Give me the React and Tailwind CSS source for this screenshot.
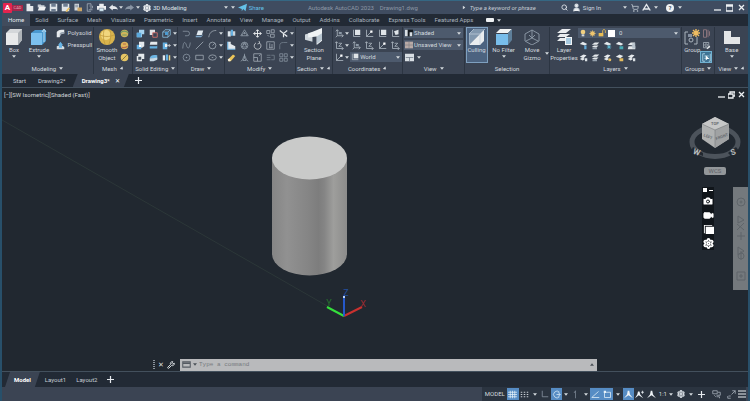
import clsx from 'clsx';
import { Camera, Search, Settings, ShoppingCart, User, Video, Wrench } from 'lucide-react';

const ICONS = {
  // title bar
  file: <path d="M2 1h5v3h4v7H2z" fill="#e4e8ec" />,
  open: <><path d="M1 2h4l1 1h4v3H1z" fill="#c9cfd6" /><path d="M1 10l2-5h9l-2 5z" fill="#eef0f2" /></>,
  save: <><path d="M1 1h10v10H1z" fill="#dfe4e8" /><path d="M3 1h6v4H3zM3 8h6v3H3z" fill="#6d7c90" /></>,
  saveAs: <><path d="M1 1h10v10H1z" fill="#dfe4e8" /><path d="M3 1h6v4H3z" fill="#6d7c90" /><path d="M6 11l4-5 2 1-4 5z" fill="#e9c063" /></>,
  openWeb: <><path d="M2 1h6v9H2z" fill="#d5dade" /><path d="M3 3h4M3 5h4" stroke="#69788b" /><path d="M6 6h6v5H6z" fill="#caa465" /></>,
  mobile: <path d="M3 1h5v2M3 1v10h5M5 9h5M8 5v3M6 4h4v3" fill="none" stroke="#aab3bd" />,
  print: <><path d="M3 1h6v3H3zM0 4h12v5H0z" fill="#eceff1" /><path d="M3 7h6v4H3z" fill="#d8edf6" stroke="#4b5a6c" strokeWidth=".6" /></>,
  undo: <path d="M0 6l5-4v2c4 0 6 2 7 5-2-1-3-1-7-1v2z" fill="#e4e8ec" />,
  redo: <path d="M12 6L7 2v2C3 4 1 6 0 9c2-1 3-1 7-1v2z" fill="#8995a4" />,
  plane: <path d="M0 6l12-5-2 10-3-3-2 3V8z" fill="#64c1e8" />,
  autodesk: <path d="M1 10L6 2l5 8M3 8h6" fill="none" stroke="#e4e8ec" strokeWidth="1.8" />,
  // small tools
  polysolid: <><path d="M1 4c2-3 5-3 10-3v5c-4 0-5 1-6 5H1z" fill="#e6eaed" /><path d="M5 6c1-2 3-2 6-2v2c-4 0-5 1-6 5z" fill="#9aa5b1" /></>,
  presspull: <><path d="M1 7l3-1h4l3 2v3H1z" fill="#d5dbe0" /><path d="M3 5l3-4 3 4-1 1v3H4V6z" fill="#68b4e5" /></>,
  union: <><path d="M4 1h7v6H8v4H1V5h3z" fill="#a7d4f0" /><path d="M1 5h6v6H1z" fill="#5ba9dd" /></>,
  subtract: <><path d="M1 1h7v7H1z" fill="#e0e3e6" /><path d="M5 5h6v6H5z" fill="#3b4453" stroke="#d1716b" strokeWidth="1.2" /></>,
  intersect: <><path d="M1 4l3-3h7v7l-3 3H1zM1 4h7v7M8 4l3-3" fill="none" stroke="#8ec4e6" /><path d="M4 4h4v4H4z" fill="#4b9ad0" /></>,
  slice: <><path d="M4 1h7v6L8 9H4z" fill="#e5e9ec" /><path d="M1 5h6v6H1z" fill="#64afe0" /><path d="M4 5h3v3H4z" fill="#fff" /></>,
  thicken: <><path d="M2 1h9v4H1z" fill="#e5e9ec" /><path d="M1 7h9l1-1v4H1z" fill="#64afe0" /></>,
  extrudeFace: <><path d="M1 2h6v9H1z" fill="#64afe0" /><path d="M4 4h3v4H4z" fill="#eff2f4" /><path d="M7 6h4M9 4l2 2-2 2" fill="none" stroke="#d9dee2" /></>,
  shell: <><path d="M3 1h8v7H8v3H1V4h2z" fill="#e5e9ec" /><path d="M3 5h4v4H3z" fill="#45515f" /></>,
  fillet: <><path d="M1 7c1-4 4-5 10-4v5H6z" fill="#6db5e3" /><path d="M1 7h5l5-1v3l-5 2H1z" fill="#c8d9e5" /></>,
  separate: <><path d="M1 3h3v7H1z" fill="#e5e9ec" /><path d="M5 2h3v8H5z" fill="#64afe0" /><path d="M9 3h2v7H9z" fill="#e9d28a" /></>,
  ballGreen: <><circle cx="6" cy="6" r="5" fill="#cfb45b" /><path d="M1 5c3-3 6-3 10 0M3 8h6" stroke="#6f9a66" strokeWidth="1.6" fill="none" /></>,
  ballRed: <><circle cx="6" cy="6" r="5" fill="#e0b65c" /><path d="M2 8c3 2 5 1 8-1M4 4h4" stroke="#b56b4c" strokeWidth="1.5" fill="none" /></>,
  ballGold: <><circle cx="6" cy="6" r="5" fill="#e6c564" /><path d="M3 9l6-6" stroke="#7f763f" strokeWidth="1.3" /></>,
  polyline: <path d="M1 3h6a3 3 0 010 6H4" fill="none" stroke="#8c98a6" />,
  spline: <path d="M1 10c1-12 4-8 5-4s4 6 5-4" fill="none" stroke="#8c98a6" />,
  polygon: <><circle cx="6" cy="6" r="4.5" fill="none" stroke="#8c98a6" /><circle cx="6" cy="6" r="1" fill="#8c98a6" /></>,
  planar: <><path d="M4 2h7L9 8H2z" fill="#dfe7ee" /><path d="M1 9h8l1-3v3l-2 2H1z" fill="#7fa8ca" /></>,
  line: <path d="M1 11L11 1" stroke="#a5afba" />,
  rect: <path d="M1 3h10v6H1z" fill="none" stroke="#a5afba" />,
  arc: <path d="M1 11C2 5 5 2 11 2" fill="none" stroke="#a5afba" />,
  circle: <><circle cx="6" cy="6" r="4.5" fill="none" stroke="#a5afba" /><path d="M6 6l3-3" stroke="#a5afba" /></>,
  ellipse: <><ellipse cx="6" cy="6" rx="5" ry="3.5" fill="none" stroke="#a5afba" /><path d="M5 6h2" stroke="#a5afba" /></>,
  mirror3d: <><path d="M1 3h4v7H1z" fill="#dde5eb" /><path d="M5 1h3v8H5z" fill="#66b0e0" /><path d="M8 3h3v6H8z" fill="#cbd4dc" /></>,
  align3d: <><path d="M1 1h4v3l6 3v4H1z" fill="#e3e8ec" /><path d="M1 1v10h10" fill="none" stroke="#70b5e2" strokeWidth="1.5" /></>,
  eraser: <><path d="M1 9l7-7 3 2-6 7H2z" fill="#ebc558" /><path d="M1 9l2-2 2 3-1 1H2z" fill="#f5efe0" /></>,
  gizmoRotate: <path d="M6 1l5 8H1zM6 4v3M3 9c0-5 6-5 6 0" fill="none" stroke="#95a1ae" />,
  gizmoGlobe: <><circle cx="6" cy="6" r="4.5" fill="none" stroke="#95a1ae" /><path d="M3 8l3-6 3 6zM3 4h6" fill="none" stroke="#95a1ae" /></>,
  gizmoScale: <path d="M6 1v6L1 11M6 7l5 4M4 7l2-4 2 4v3H4z" fill="none" stroke="#95a1ae" />,
  move: <path d="M6 1v10M1 6h10M4 3l2-2 2 2M4 9l2 2 2-2M3 4L1 6l2 2M9 4l2 2-2 2" fill="none" stroke="#f0f3f5" strokeWidth="1.2" />,
  rotate: <path d="M9 3a4.500 4.500 0 11-5-.500M8 0l1 3-3 1" fill="none" stroke="#d5dade" />,
  scale: <path d="M1 1h10v10H1zM1 6h5v5M8 4l2-2" fill="none" stroke="#a5afba" />,
  copy: <path d="M1 2h4v4H1zM7 1h4v4H7zM6 7h5v4H6zM2 8l2 2" fill="none" stroke="#a5afba" />,
  stretch: <path d="M1 1h10v10H1zM5 3v6M8 4v5M4 9h5" fill="none" stroke="#a5afba" />,
  offset: <path d="M1 3h5M1 6h5M1 9h5M7 3h4v6H7" fill="none" stroke="#75818f" />,
  trim: <><path d="M1 2l5 4 5-4M6 6v5" fill="none" stroke="#e5e9ec" strokeWidth="1.600" /><path d="M7 7l4 3" stroke="#e5e9ec" strokeWidth="2" /></>,
  corner: <path d="M1 11V6c0-3 2-4 5-4h5" fill="none" stroke="#75818f" />,
  array: <path d="M1 1h4v4H1zM7 1h4v4H7zM1 7h4v4H1zM7 7h4v4H7z" fill="none" stroke="#8b97a4" />,
  ucs: <><path d="M3 1v8h8M3 9l-2 2M1 3l2-2 2 2M9 7l2 2-2 2" fill="none" stroke="#b4bdc7" /><path d="M5 4h4v3H5z" fill="#8d99a6" /></>,
  ucsNamed: <><path d="M2 1v9h9" fill="none" stroke="#b4bdc7" /><path d="M4 1h7v7H4z" fill="#dfe4e8" /></>,
  ucsPoint: <><path d="M2 1v9h9M2 10l6-6" fill="none" stroke="#b4bdc7" /><path d="M7 2h3v3H7z" fill="#fff" /></>,
  ucsView: <><path d="M2 1v9h9" fill="none" stroke="#b4bdc7" /><path d="M4 3l6-2v6L6 8z" fill="#dfe4e8" /></>,
  ucsAxis: <path d="M2 1v9h9M0 3l2-2 2 2M9 8l2 2-2 2M5 3h4L5 7h4" fill="none" stroke="#b4bdc7" />,
  bulb: <><circle cx="6" cy="4.500" r="3.500" fill="#efcf80" /><path d="M4 8h4v3H4z" fill="#d1d6da" /></>,
  sun: <><circle cx="6" cy="6" r="4" fill="#efc56f" /><path d="M6 0v12M0 6h12M2 2l8 8M10 2l-8 8" stroke="#efc56f" strokeWidth=".8" /></>,
  unlock: <><path d="M1 6h7v5H1z" fill="#e9bd54" /><path d="M7 6V3c0-3 4-3 4 0v3" fill="none" stroke="#e9bd54" strokeWidth="1.300" /></>,
  layerOff: <><path d="M1 4l4-3 6 3-3 2z" fill="#e5e9ec" /><path d="M7 6h3v5H7z" fill="#62a9d8" /></>,
  layerIso: <><path d="M1 5l4-3h6L8 5zM1 8l3-2h6L7 9z" fill="#e5e9ec" /><path d="M2 9h6v2H2z" fill="#96a2ae" /></>,
  layerFreeze: <><path d="M1 4l4-3 6 3-3 2z" fill="#e5e9ec" /><path d="M8 5v6M5 8h6M6 6l4 4M10 6l-4 4" stroke="#5fc2dd" /></>,
  layerLock: <><path d="M1 4l4-3 6 3-3 2z" fill="#e5e9ec" /><path d="M6 7h5v4H6z" fill="#49abb4" /></>,
  layerLockGold: <><path d="M1 5l5-3 5 2-4 3z" fill="#e5e9ec" /><path d="M6 7h5v4H6z" fill="#e6bd5f" /></>,
  layerMatch: <><path d="M1 5l4-3h6L8 6zM2 7h9v4H1z" fill="#e5e9ec" /><path d="M7 3h4v7H7z" fill="#b9c4ce" /></>,
  layerOn: <><path d="M1 5l5-3 4 1-4 4zM1 8l4-2 3 2-3 2z" fill="#e5e9ec" /><path d="M8 7h3v4H8z" fill="#dce2e6" /></>,
  layerThaw: <><path d="M1 5l5-3 4 1-4 4zM1 8l4-2 3 2-3 2z" fill="#e5e9ec" /><circle cx="9" cy="9" r="2" fill="#e6bd5f" /></>,
  ungroup: <path d="M2 1h4v10H2zM8 1v10M10 3v6" fill="none" stroke="#a28187" />,
  groupEdit: <><path d="M2 2h7v7H2zM4 4h3v3H4z" fill="none" stroke="#aeb7c0" /><path d="M6 10l4-4 1 2-4 3z" fill="#e5e9ec" /></>,
  groupSelect: <><path d="M1 1v10h3M1 1h3M11 1v10H9M3 4h6M3 7h3" fill="none" stroke="#bfe3f2" /><path d="M5 3l5 5H7l-2 2z" fill="#fff" /></>,
  viewStyle: <><path d="M0 1h12v10H0z" fill="#141a20" /><path d="M0 1h4v10H0zM7 5h4v6H7z" fill="#d9dfe4" /></>,
  viewNamed: <><path d="M0 1h12v10H0z" fill="#b9aaa6" /><path d="M0 6h12M6 1v10" stroke="#7f7f86" /></>,
  viewport: <><path d="M0 1h12v10H0z" fill="#d9dfe4" /><path d="M1 6h10M6 6v5" stroke="#6c7784" /></>,
  // status bar
  grid: <path d="M0 3h12M0 6h12M0 9h12M3 1v10M6 1v10M9 1v10" stroke="#e6f1f9" />,
  snap: <path d="M1 3h10M1 6h10M1 9h10" stroke="#dce1e6" strokeWidth="1.200" strokeDasharray="2 2" />,
  ortho: <path d="M3 1v8h8" fill="none" stroke="#8f9aa7" />,
  polar: <><path d="M10 3a4.500 4.500 0 100 6M6 6h5M8 3l3 3-3 3" fill="none" stroke="#dcecf8" /></>,
  iso: <path d="M6 1v10M4 4l2-3" fill="none" stroke="#808b98" />,
  track: <path d="M1 10h10M1 10l9-8" fill="none" stroke="#e6f1f9" />,
  osnap: <><path d="M2 3h8v7H2z" fill="none" stroke="#e6f1f9" /><path d="M1 1h3v3H1z" fill="#e6f1f9" /></>,
  anno: <path d="M5 1h2l1 5 4 5-6-4-6 4 4-5z" fill="#eef3f7" />,
  annoAuto: <><path d="M4 2h2l1 4 4 5-6-4-5 4 3-5z" fill="#eef3f7" /><path d="M8 3h4M10 1v4" stroke="#eef3f7" /></>,
  isolate: <path d="M1 1h6v4H1zM8 3h3v4H6M3 7l2 2M6 9h4v2" fill="none" stroke="#aeb7c0" />,
  clean: <path d="M1 8v3h4M7 1h4v4M6 6l5-5M2 8h3" fill="none" stroke="#aeb7c0" />,
};

const TABS = ['Home', 'Solid', 'Surface', 'Mesh', 'Visualize', 'Parametric', 'Insert', 'Annotate', 'View', 'Manage', 'Output', 'Add-ins', 'Collaborate', 'Express Tools', 'Featured Apps'];

function Glyph({ name, className = 'size-[9px]' }) {
  return <svg viewBox="0 0 12 12" className={clsx('shrink-0', className)} aria-hidden="true">{ICONS[name]}</svg>;
}

function Caret({ className }) {
  return (
    <svg viewBox="0 0 6 4" className={clsx('w-[4px] h-[3px] shrink-0', className)} aria-hidden="true">
      <path d="M0 0h6L3 4z" fill="#d3d8dd" />
    </svg>
  );
}

function Tool({ name, size, className }) {
  return (
    <button type="button" aria-label={name} className={clsx('flex items-center justify-center h-[12px] shrink-0', className)}>
      <Glyph name={name} className={size} />
    </button>
  );
}

// a block of small tools, three rows high
function ToolGrid({ rows, cell = 'w-[13px]', carets = true }) {
  return (
    <div>
      {rows.map((row) => (
        <div key={row.join()} className="flex items-center">
          {row.map((name, i) => <Tool key={name + i} name={name} className={cell} />)}
          {carets && <Caret />}
        </div>
      ))}
    </div>
  );
}

function BigButton({ icon, lines, caret, className }) {
  return (
    <button type="button" className={clsx('flex flex-col items-center h-[36px] leading-[8px]', className)}>
      <span className="flex items-center h-[19px]">{icon}</span>
      {lines.map((line) => <span key={line} className="whitespace-nowrap">{line}</span>)}
      {caret && <Caret className="mt-[1px]" />}
    </button>
  );
}

function Panel({ title, caret = true, dialog, className, children }) {
  return (
    <section className={clsx('min-w-0 basis-0 flex flex-col border-r border-[#2c3542]', className)}>
      <div className="flex-1 flex items-start justify-center">{children}</div>
      <footer className="h-[11px] flex items-center justify-center gap-[3px] whitespace-nowrap">
        {title}
        {caret && <Caret />}
        {dialog && <Caret className="-rotate-45" />}
      </footer>
    </section>
  );
}

function Combo({ label, icon, value, pad = 'pl-[10px]' }) {
  return (
    <div className="relative flex items-center h-[12px] bg-[#4d5a6d] border-y border-[#3b4453]">
      <span className="absolute left-[1px] flex items-center gap-[2px]">{icon}</span>
      <select aria-label={label} className={clsx('appearance-none w-full h-[12px] -my-px leading-[12px] outline-none', pad)}>
        <option>{value}</option>
      </select>
      <Caret className="absolute right-[2px]" />
    </div>
  );
}

function TitleBar() {
  return (
    <header className="h-[14px] flex items-center bg-[#3f4c60] border-t border-[#356783] pl-[1px] pr-[3px]">
      <button type="button" className="flex items-center" aria-label="Application menu">
        <span className="w-[9px] h-[10px] rounded-[1px] bg-[#e4244f] text-white font-bold text-[8px] leading-[10px] text-center">A</span>
        <span className="w-[11px] h-[6px] bg-[#a3264a] text-[#e6a9b7] text-[4px] leading-[6px] text-center">CAD</span>
      </button>
      <div className="flex items-center">
        {['file', 'open', 'save', 'saveAs', 'openWeb', 'mobile', 'print', 'undo'].map((name) => (
          <Tool key={name} name={name} className="w-[12px]" />
        ))}
        <Caret />
        <Tool name="redo" className="w-[13px]" />
        <Caret />
      </div>
      <button type="button" className="flex items-center gap-[2px] ml-[3px] text-[#dfe4e9] whitespace-nowrap">
        <Settings size={8} strokeWidth={4} color="#f0f2f4" />3D Modeling
      </button>
      <Caret className="ml-[37px]" />
      <Caret className="ml-[3px]" />
      <button type="button" className="flex items-center gap-[2px] ml-[3px] text-[#64c1e8]">
        <Glyph name="plane" />Share
      </button>
      <h1 className="flex-1 text-center text-[#8d98a7] whitespace-pre">Autodesk AutoCAD 2023    Drawing1.dwg</h1>
      <Caret className="-rotate-90" />
      <input aria-label="Search" placeholder="Type a keyword or phrase" className="w-[91px] ml-[4px] italic outline-none placeholder:text-[#c6cdd5]" />
      <Search size={7} strokeWidth={3} color="#dfe4e9" />
      <button type="button" className="flex items-center gap-[2px] ml-[4px] whitespace-nowrap">
        <User size={9} strokeWidth={3} fill="#eef1f3" />Sign In
      </button>
      <Caret className="ml-[22px]" />
      <ShoppingCart size={8} strokeWidth={3} color="#a6b0bb" className="ml-[4px]" />
      <Glyph name="autodesk" className="size-[9px] ml-[3px]" />
      <Caret className="ml-[3px]" />
      <button type="button" aria-label="Help" className="size-[8px] ml-[8px] rounded-full bg-[#eef1f3] text-[#3f4c60] font-bold leading-[8px]">?</button>
      <Caret className="ml-[4px]" />
      <div className="flex items-center gap-[5px] ml-[32px]">
        <WindowButtons />
      </div>
    </header>
  );
}

function WindowButtons({ restored }) {
  const middle = restored ? 'M0 3h5v4H0zM2 3V1h5v4H5' : 'M0 1h7v6H0zM0 2h7';
  return ['M0 6h7', middle, 'M1 1l5 5M6 1L1 6'].map((d) => (
    <button key={d} type="button" aria-label="Window control" className="w-[7px] h-[8px]">
      <svg viewBox="0 0 7 8" className="size-full"><path d={d} fill="none" stroke="#eef1f3" strokeWidth="1.300" /></svg>
    </button>
  ));
}

function RibbonTabs() {
  return (
    <nav className="h-[12px] flex items-stretch bg-[#222a35] text-[#a9b2bd]">
      {TABS.map((tab) => (
        <button
          key={tab}
          type="button"
          className={clsx('leading-[12px] whitespace-nowrap', tab === 'Home' ? 'px-[6px] bg-[#414c5d] text-[#e8ecf0]' : 'pl-[5px] pr-[4px]')}
        >
          {tab}
        </button>
      ))}
      <button type="button" aria-label="Ribbon display" className="flex items-center gap-[3px] pl-[9px]">
        <span className="w-[8px] h-[4px] rounded-[1px] bg-[#eef1f3]" /><Caret />
      </button>
    </nav>
  );
}

function Ribbon() {
  return (
    <div className="flex h-[48px] pt-[1px] bg-[#3b4453] text-[#d3d9df]">
      <Panel title="Modeling" className="grow-[92]">
        <BigButton
          className="w-[23px]"
          lines={['Box']}
          caret
          icon={<svg viewBox="0 0 16 16" className="size-[16px]"><path d="M0 4l4-4h12v11l-4 5H0z" fill="#d4d7da" /><path d="M0 4h12v12H0z" fill="#e8e9ea" /><path d="M12 4l4-4v11l-4 5z" fill="#aeb3b8" /></svg>}
        />
        <BigButton
          className="w-[27px]"
          lines={['Extrude']}
          caret
          icon={<svg viewBox="0 0 16 16" className="size-[16px]"><path d="M0 4l4-3h11v11l-4 4H0z" fill="#4a98cf" /><path d="M0 4h11v12H0z" fill="#7cc0ee" /><path d="M13 1v12M11 3l2-3 2 3" fill="none" stroke="#b9dcf2" /></svg>}
        />
        <div className="ml-[4px]">
          {[['polysolid', 'Polysolid'], ['presspull', 'Presspull']].map(([name, label]) => (
            <button key={name} type="button" className="flex items-center gap-[2px] h-[12px]">
              <Glyph name={name} />{label}
            </button>
          ))}
        </div>
      </Panel>
      <Panel title="Mesh" caret={false} dialog className="grow-[39]">
        <BigButton
          className="w-[24px]"
          lines={['Smooth', 'Object']}
          icon={<svg viewBox="0 0 16 16" className="size-[16px]"><circle cx="8" cy="8" r="8" fill="#d9b44d" /><circle cx="7" cy="6" r="5" fill="#f1d67e" /><path d="M1 6c5 2 9 2 14 0M5 1c-1 5-1 9 1 14M11 1c1 5 1 9-1 14" fill="none" stroke="#bd9638" strokeWidth=".7" /></svg>}
        />
        <ToolGrid rows={[['ballGreen'], ['ballRed'], ['ballGold']]} carets={false} cell="w-[12px]" />
      </Panel>
      <Panel title="Solid Editing" className="grow-[45]">
        <ToolGrid rows={[['union', 'subtract', 'intersect'], ['slice', 'thicken', 'extrudeFace'], ['shell', 'fillet', 'separate']]} />
      </Panel>
      <Panel title="Draw" className="grow-[46]">
        <ToolGrid rows={[['polyline', 'planar', 'arc'], ['spline', 'line', 'circle'], ['polygon', 'rect', 'ellipse']]} />
      </Panel>
      <Panel title="Modify" className="grow-[71]">
        <ToolGrid rows={[['mirror3d', 'gizmoRotate', 'move', 'copy', 'trim'], ['align3d', 'gizmoGlobe', 'rotate', 'stretch', 'corner'], ['eraser', 'gizmoScale', 'scale', 'offset', 'array']]} />
      </Panel>
      <Panel title="Section" dialog className="grow-[37]">
        <BigButton
          lines={['Section', 'Plane']}
          icon={<svg viewBox="0 0 16 16" className="size-[17px]"><path d="M0 6l7-2v9l-7-2z" fill="#cfd6dc" /><path d="M6 4l10-4v12l-5 4V8L3 9V5z" fill="#f0f3f5" /><path d="M11 8l5-3v6l-5 4z" fill="#b9c6d1" /></svg>}
        />
      </Panel>
      <Panel title="Coordinates" caret={false} dialog className="grow-[70]">
        <div className="flex">
          <div className="w-[17px]">
            <div className="flex items-center"><Tool name="ucs" className="w-[12px]" /><Caret /></div>
            <div className="flex items-center"><Tool name="ucsAxis" className="w-[12px]" /><Caret /></div>
            <div className="flex items-center"><Tool name="ucsPoint" className="w-[12px]" /><Caret /></div>
          </div>
          <div className="w-[52px]">
            <ToolGrid rows={[['ucsNamed', 'ucsPoint', 'ucsNamed', 'ucsView'], ['ucs', 'ucsAxis', 'ucsPoint', 'ucsAxis']]} carets={false} />
            <Combo label="UCS" value="World" icon={<Glyph name="ucsNamed" className="size-[8px]" />} />
          </div>
        </div>
      </Panel>
      <Panel title="View" className="grow-[62]">
        <div className="flex-1 px-[1px]">
          <Combo label="Visual style" value="Shaded" icon={<Glyph name="viewStyle" className="size-[8px]" />} />
          <Combo label="Named view" value="Unsaved View" icon={<Glyph name="viewNamed" className="size-[8px]" />} />
          <div className="flex items-center gap-[2px]"><Tool name="viewport" className="w-[11px]" /><Caret /></div>
        </div>
      </Panel>
      <Panel title="Selection" caret={false} className="grow-[85]">
        <BigButton
          className="w-[22px] bg-[#4c6380] outline outline-1 -outline-offset-1 outline-[#7fa0bf]"
          lines={['Culling']}
          icon={<svg viewBox="0 0 16 16" className="size-[16px]"><path d="M0 5l5-5h11L0 16z" fill="#8197ae" /><path d="M1 15L15 1v11l-4 4H1z" fill="#e9ecee" /><path d="M0 5h11v11M5 0L0 5v11M11 5l5-5" fill="none" stroke="#c3d0dc" strokeWidth=".7" /></svg>}
        />
        <BigButton
          className="w-[32px]"
          lines={['No Filter']}
          caret
          icon={<svg viewBox="0 0 16 16" className="size-[16px]"><path d="M0 4l4-4h12l-4 4z" fill="#f0f2f3" /><path d="M0 5h12v11H0z" fill="#78bdeb" /><path d="M12 4l4-4v11l-4 5z" fill="#5e7f9a" /></svg>}
        />
        <BigButton
          className="w-[25px]"
          lines={['Move', 'Gizmo']}
          icon={<svg viewBox="0 0 16 16" className="size-[16px]"><path d="M8 1l7 4v7l-7 4-7-4V5zM8 1v8M8 9l-6 3M8 9l6 3M5 6l3 3 3-3" fill="none" stroke="#919daa" strokeWidth=".900" /></svg>}
        />
        <Caret className="self-end mb-[8px]" />
      </Panel>
      <Panel title="Layers" className="grow-[133]">
        <BigButton
          className="w-[28px]"
          lines={['Layer', 'Properties']}
          icon={<svg viewBox="0 0 16 16" className="size-[16px]"><path d="M1 4l5-4h9l-5 4zM1 8l3-3h10l-4 3zM1 12l3-3h6v3z" fill="#e9ecef" /><path d="M9 8h7v8H9z" fill="#f3f5f6" /><path d="M10 10h5M10 12h5M10 14h5" stroke="#5a9fcc" /></svg>}
        />
        <div className="flex-1 pr-[1px]">
          <Combo
            label="Layer"
            value="0"
            pad="pl-[41px]"
            icon={<><Glyph name="bulb" className="size-[8px]" /><Glyph name="sun" className="size-[7px]" /><Glyph name="unlock" className="size-[8px]" /><span className="size-[7px] bg-white" /></>}
          />
          <ToolGrid
            carets={false}
            cell="w-[12px]"
            rows={[['layerOff', 'layerIso', 'layerFreeze', 'layerLock', 'layerMatch'], ['layerOn', 'layerIso', 'layerThaw', 'layerLockGold', 'layerOn']]}
          />
        </div>
      </Panel>
      <Panel title="Groups" className="grow-[33]">
        <BigButton
          lines={['Group']}
          icon={<svg viewBox="0 0 16 16" className="size-[16px]"><path d="M4 3H1v12h3M10 15h3V8" fill="none" stroke="#aab3bd" /><circle cx="7" cy="11" r="2" fill="none" stroke="#aab3bd" /><path d="M4 5h4v3H4z" fill="#8590a0" /><path d="M12 0v8M8 4h8M9 1l6 6M15 1L9 7" stroke="#f0bd62" strokeWidth="1.400" /></svg>}
        />
        <div>
          <Tool name="ungroup" className="w-[12px]" />
          <Tool name="groupEdit" className="w-[12px]" />
          <Tool name="groupSelect" className="w-[12px] bg-[#3f7394] outline outline-1 -outline-offset-1 outline-[#6fb0d0]" />
        </div>
      </Panel>
      <Panel title="View" dialog className="grow-[33] border-r-0">
        <BigButton
          lines={['Base']}
          caret
          icon={<svg viewBox="0 0 16 16" className="size-[16px]"><path d="M0 2h7v6h9v7H0z" fill="#e3e5e7" /></svg>}
        />
      </Panel>
    </div>
  );
}

function SheetTab({ label, active, closable }) {
  return (
    <button
      type="button"
      className={clsx(
        'h-full flex items-center gap-[5px] whitespace-nowrap',
        active
          ? 'px-[9px] bg-[#3b4453] text-white font-bold [clip-path:polygon(5px_0,100%_0,calc(100%-5px)_100%,0_100%)]'
          : 'px-[5px] text-[#c6cdd5]',
      )}
    >
      {label}
      {closable && <span className="font-normal">✕</span>}
    </button>
  );
}

function AddTab({ className }) {
  return (
    <button type="button" aria-label="New tab" className={className}>
      <svg viewBox="0 0 7 7" className="size-[7px]"><path d="M3.500 0v7M0 3.500h7" stroke="#e6eaee" strokeWidth="1.200" /></svg>
    </button>
  );
}

function ViewCube() {
  return (
    <svg viewBox="0 0 54 48" className="w-[54px] h-[48px]" role="img" aria-label="View cube">
      <ellipse cx="27" cy="27" rx="23" ry="14.500" fill="none" stroke="#4c535b" strokeWidth="5" />
      <path d="M27 2l14 7v15L27 33 14 24V9z" fill="#b0b2b2" />
      <path d="M14 9l13-7 14 7-14 6z" fill="#c6c7c7" />
      <path d="M27 15l14-6v15l-14 9z" fill="#a0a2a3" />
      <path d="M14 9l13 6v18M27 15l14-6" fill="none" stroke="#777b7e" strokeWidth=".6" />
      <g fontSize="4" fontWeight="bold" fill="#666b70" textAnchor="middle">
        <text x="27" y="10">TOP</text>
        <text x="20" y="23" transform="rotate(20 20 22)">LEFT</text>
        <text x="34" y="23" transform="rotate(-20 34 22)">FRONT</text>
      </g>
      <path d="M5 32l10 6v3L3 36z" fill="#212830" />
      <path d="M40 38l8-6 3 4-8 5z" fill="#212830" />
      <g fontSize="8" fontWeight="bold" fill="#b9bcbe">
        <text x="5" y="40" transform="rotate(20 9 38)">W</text>
        <text x="43" y="40" transform="rotate(-20 45 38)">S</text>
      </g>
    </svg>
  );
}

function Drawing() {
  return (
    <svg className="absolute inset-0 size-full" role="img" aria-label="Shaded cylinder">
      <defs>
        <linearGradient id="side">
          <stop offset="0" stopColor="#858585" />
          <stop offset=".2" stopColor="#919191" />
          <stop offset=".48" stopColor="#858585" />
          <stop offset=".62" stopColor="#7d7d7d" />
          <stop offset=".7" stopColor="#858585" />
          <stop offset=".82" stopColor="#9e9e9c" />
          <stop offset="1" stopColor="#8c8c8b" />
        </linearGradient>
      </defs>
      <path d="M0 32L327 219" stroke="#313e3c" strokeWidth=".7" />
      <path d="M270 70v96a37.500 21.500 0 0075 0V70z" fill="url(#side)" />
      <ellipse cx="307.500" cy="70" rx="37.500" ry="21.500" fill="#c9cac9" />
      <g strokeWidth="2">
        <path d="M342 228l-17-9" stroke="#35e03c" />
        <path d="M342 228l18-9" stroke="#c9312f" />
        <path d="M342 228v-19" stroke="#2558c9" />
      </g>
      <path d="M341 209h2" stroke="#b9d6ff" strokeWidth="2" />
      <g fontSize="9" textAnchor="middle">
        <text x="327" y="218" fill="#28702f">Y</text>
        <text x="361" y="219" fill="#9c2b30">X</text>
        <text x="344" y="208" fill="#244f9d">Z</text>
      </g>
    </svg>
  );
}

function Canvas() {
  return (
    <main className="relative flex-1 overflow-hidden bg-[#212830]">
      <Drawing />
      <div className="relative flex items-center justify-between pl-[2px] pr-[3px] h-[14px] text-[#d0d5da]">
        <span>[−][SW Isometric][Shaded (Fast)]</span>
        <span className="flex gap-[3px]"><WindowButtons restored /></span>
      </div>
      <div className="absolute right-0 top-[27px] flex flex-col items-center w-[66px]">
        <ViewCube />
        <button type="button" className="w-[22px] h-[8px] mt-[4px] rounded-[2px] bg-[#93979a] text-[#5c6166] leading-[8px]">WCS</button>
      </div>
      <div className="absolute right-[34px] top-[99px] w-[12px] h-[63px] flex flex-col items-center justify-between py-[1px] bg-[#10151a] text-white">
        <span className="flex items-center gap-[2px]"><span className="size-[4px] bg-white" /><span className="w-[4px] h-px bg-white" /></span>
        <Camera size={12} fill="#fff" stroke="#10151a" />
        <Video size={11} fill="#fff" />
        <svg viewBox="0 0 12 12" className="size-[11px]"><path d="M3 3h9v8H3zM1 1h9v1H2v8H1z" fill="#fff" /></svg>
        <Settings size={11} strokeWidth={4} />
      </div>
      <svg viewBox="0 0 15 103" className="absolute right-0 top-[99px] w-[15px] h-[103px]" role="img" aria-label="Navigation bar">
        <path d="M0 0h15v103H0z" fill="#74797d" />
        <g fill="none" stroke="#5f656a">
          <circle cx="8" cy="15" r="4" /><circle cx="8" cy="15" r="1" />
          <path d="M5 29v7l6-3zM4 43l7-7M4 37l7 6M4 49h8M8 45v8M5 60l6 4-6 4zM8 64v9" />
          <circle cx="8" cy="69" r="3" />
          <path d="M4 85h8v8H4zM7 88h2v2H7z" />
        </g>
      </svg>
      <form className="absolute bottom-0 inset-x-[151px] flex items-center h-[13px]" onSubmit={(e) => e.preventDefault()}>
        <span className="w-[2px] h-[9px] border-x border-dotted border-[#8a939d]" />
        <button type="button" aria-label="Close command line" className="w-[12px] text-[7px] text-[#d5dade]">✕</button>
        <button type="button" aria-label="Customize" className="w-[13px]"><Wrench size={8} strokeWidth={3} color="#d5dade" /></button>
        <label className="flex-1 flex items-center gap-[2px] h-[12px] pl-[2px] pr-[3px] bg-[#b9babc]">
          <svg viewBox="0 0 12 9" className="w-[9px] h-[7px]"><path d="M1 1h10v7H1zM1 3h10" fill="none" stroke="#555b62" strokeWidth="1.400" /></svg>
          <svg viewBox="0 0 6 4" className="w-[4px] h-[3px]"><path d="M0 0h6L3 4z" fill="#4b5158" /></svg>
          <input aria-label="Command" placeholder="Type a command" className="flex-1 font-[Liberation_Mono,monospace] outline-none placeholder:text-[#777b80]" />
          <svg viewBox="0 0 6 4" className="w-[4px] h-[3px]"><path d="M0 4h6L3 0z" fill="#4b5158" /></svg>
        </label>
      </form>
    </main>
  );
}

function StatusBar() {
  const on = 'bg-[#568cc4]';
  return (
    <footer className="h-[14px] flex items-center justify-end pr-[2px] bg-[#3b4453]">
      <div className="flex items-center h-full pl-[3px] bg-[#2b3440]">
        <button type="button" className="mr-[2px]">MODEL</button>
        <Tool name="grid" className={clsx('w-[12px]', on)} />
        <Tool name="snap" className="w-[12px]" />
        <Caret className="mx-[2px]" />
        <Tool name="ortho" className="w-[12px]" />
        <Tool name="polar" className={clsx('w-[11px]', on)} />
        <Caret className="mx-[2px]" />
        <Tool name="iso" className="w-[12px]" />
        <Caret className="mx-[2px]" />
        <Tool name="track" className={clsx('w-[12px]', on)} />
        <Tool name="osnap" className={clsx('w-[11px]', on)} />
        <Caret className="mx-[3px]" />
        <Tool name="anno" className={clsx('w-[11px]', on)} />
        <Tool name="annoAuto" className="w-[12px]" />
        <Tool name="anno" className="w-[12px]" />
        <button type="button" className="flex items-center gap-[2px] mx-[1px]">1:1<Caret /></button>
        <button type="button" aria-label="Workspace" className="flex items-center gap-[4px] ml-[3px]">
          <Settings size={8} strokeWidth={4} /><Caret />
        </button>
        <AddTab className="px-[5px]" />
        <Tool name="isolate" className="w-[12px]" />
        <Tool name="clean" className="w-[12px] ml-[3px]" />
        <button type="button" aria-label="Customization" className="ml-[1px]">
          <svg viewBox="0 0 8 8" className="size-[8px]"><path d="M0 1h8M0 4h8M0 7h8" stroke="#eef1f3" /></svg>
        </button>
      </div>
    </footer>
  );
}

export default function App() {
  return (
    <div className="min-h-screen flex flex-col bg-[#212830] border-x-2 border-[#28506a] font-[Roboto,'Noto_Sans',sans-serif] text-[6px] leading-[8px] text-[#d3d9df]">
      <TitleBar />
      <RibbonTabs />
      <Ribbon />
      <div className="h-[14px] flex items-center gap-[2px] bg-[#222a35] border-b border-[#43505d] pl-[6px]">
        <SheetTab label="Start" />
        <SheetTab label="Drawing2*" />
        <SheetTab label="Drawing3*" active closable />
        <AddTab className="px-[4px]" />
      </div>
      <Canvas />
      <div className="h-[16px] flex items-center bg-[#222a35] border-t border-[#43505d] pl-[3px]">
        <SheetTab label="Model" active />
        <SheetTab label="Layout1" />
        <SheetTab label="Layout2" />
        <AddTab className="px-[5px]" />
      </div>
      <StatusBar />
    </div>
  );
}
